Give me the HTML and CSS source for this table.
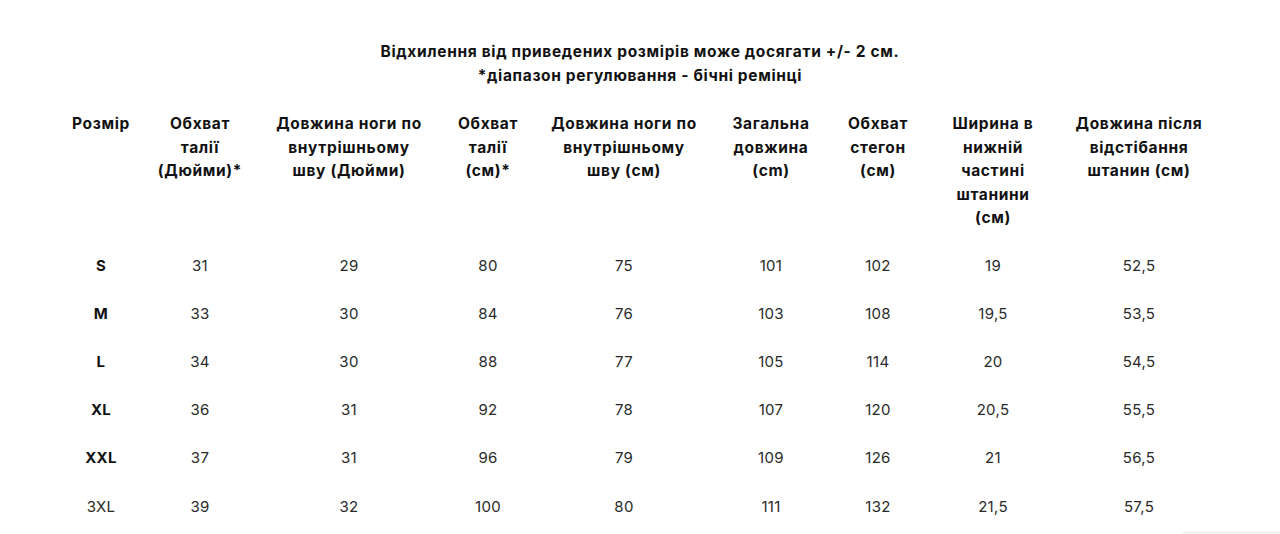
FILE: index.html
```html
<!DOCTYPE html>
<html lang="uk">
<head>
<meta charset="utf-8">
<title>Таблиця розмірів</title>
<link rel="stylesheet" href="styles.css">
</head>
<body>
<div class="page">
  <div class="note">
    <p>Відхилення від приведених розмірів може досягати +/- 2 см.</p>
    <p>*діапазон регулювання - бічні ремінці</p>
  </div>
  <table class="sizes">
    <colgroup>
      <col class="c1"><col class="c2"><col class="c3"><col class="c4"><col class="c5"><col class="c6"><col class="c7"><col class="c8"><col class="c9">
    </colgroup>
    <thead>
      <tr>
        <th>Розмір</th>
        <th>Обхват<br>талії<br>(Дюйми)*</th>
        <th>Довжина ноги по<br>внутрішньому<br>шву (Дюйми)</th>
        <th>Обхват<br>талії<br>(см)*</th>
        <th>Довжина ноги по<br>внутрішньому<br>шву (см)</th>
        <th>Загальна<br>довжина<br>(cm)</th>
        <th>Обхват<br>стегон<br>(см)</th>
        <th>Ширина в<br>нижній<br>частині<br>штанини<br>(см)</th>
        <th>Довжина після<br>відстібання<br>штанин (см)</th>
      </tr>
    </thead>
    <tbody>
      <tr><td class="sz">S</td><td>31</td><td>29</td><td>80</td><td>75</td><td>101</td><td>102</td><td>19</td><td>52,5</td></tr>
      <tr><td class="sz">M</td><td>33</td><td>30</td><td>84</td><td>76</td><td>103</td><td>108</td><td>19,5</td><td>53,5</td></tr>
      <tr><td class="sz">L</td><td>34</td><td>30</td><td>88</td><td>77</td><td>105</td><td>114</td><td>20</td><td>54,5</td></tr>
      <tr><td class="sz">XL</td><td>36</td><td>31</td><td>92</td><td>78</td><td>107</td><td>120</td><td>20,5</td><td>55,5</td></tr>
      <tr><td class="sz">XXL</td><td>37</td><td>31</td><td>96</td><td>79</td><td>109</td><td>126</td><td>21</td><td>56,5</td></tr>
      <tr><td>3XL</td><td>39</td><td>32</td><td>100</td><td>80</td><td>111</td><td>132</td><td>21,5</td><td>57,5</td></tr>
    </tbody>
  </table>
</div>
<div class="corner"></div>
</body>
</html>
```

FILE: styles.css
```css
html, body {
  margin: 0;
  padding: 0;
  background: #fff;
}
body {
  font-family: Inter, "Open Sans", "Liberation Sans", sans-serif;
  color: #111;
  overflow: hidden;
}
.page {
  padding-top: 40px;
}
.note {
  text-align: center;
  font-weight: 700;
  font-size: 15.5px;
  letter-spacing: 0.65px;
  line-height: 24px;
  color: #111;
}
.note p {
  margin: 0;
}
.sizes {
  border-collapse: collapse;
  table-layout: fixed;
  width: 1158px;
  margin: 24px 0 0 60px;
  font-size: 15.5px;
}
.c1 { width: 82px; }
.c2 { width: 116px; }
.c3 { width: 182px; }
.c4 { width: 96px; }
.c5 { width: 176px; }
.c6 { width: 118px; }
.c7 { width: 96px; }
.c8 { width: 134px; }
.c9 { width: 158px; }
.sizes th {
  font-weight: 700;
  letter-spacing: 0.65px;
  line-height: 23.6px;
  vertical-align: top;
  text-align: center;
  white-space: nowrap;
  padding: 0 0 11px 0;
  color: #111;
}
.sizes td {
  height: 48.2px;
  padding: 0;
  text-align: center;
  vertical-align: middle;
  font-weight: 400;
  font-size: 15px;
  letter-spacing: 0.3px;
  color: #2a2a2a;
}
.sizes td.sz {
  font-weight: 700;
  color: #111;
}
.corner {
  position: fixed;
  right: 0;
  bottom: -20px;
  width: 100px;
  height: 23px;
  border-radius: 8px 0 0 0;
  background: #f3f3f3;
}
```
